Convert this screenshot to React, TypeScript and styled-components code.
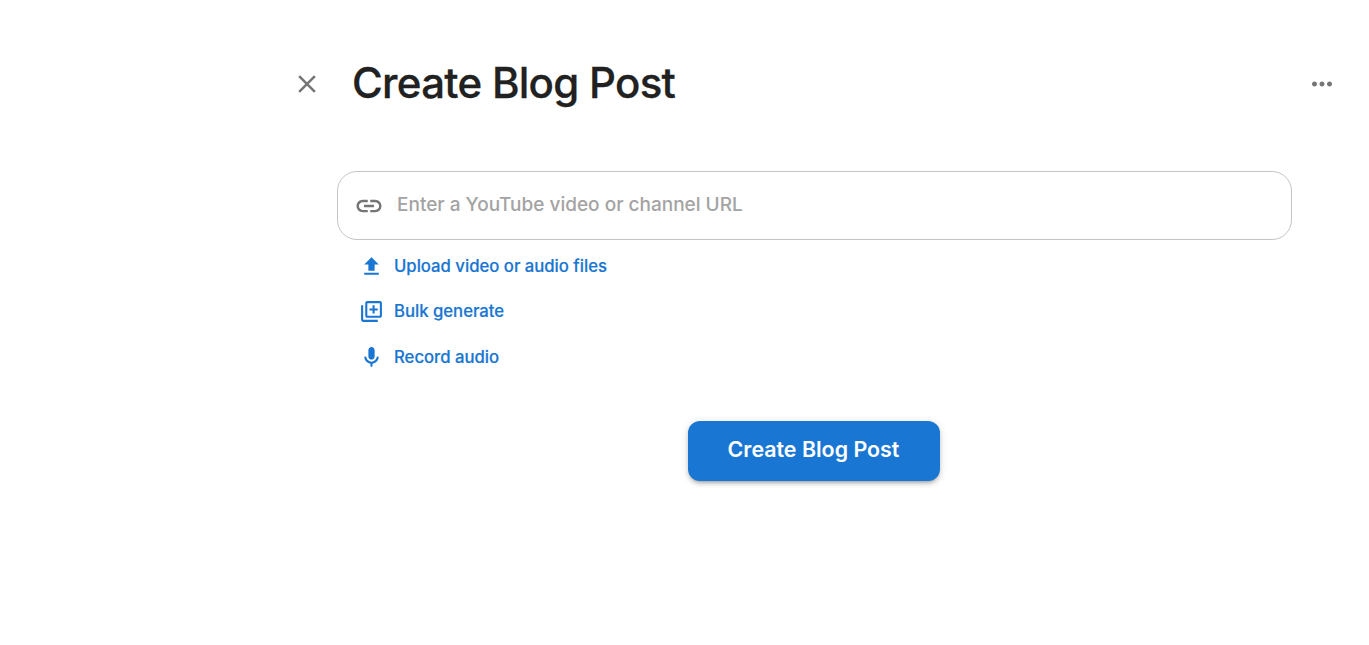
import React from 'react';
import styled, { createGlobalStyle } from 'styled-components';

const GlobalStyle = createGlobalStyle`
  html, body {
    margin: 0;
    padding: 0;
    background: #fff;
    font-family: 'Inter', 'Liberation Sans', sans-serif;
  }
`;

const Page = styled.div`
  height: 645px;
  overflow: hidden;
  box-sizing: border-box;
  padding: 54px 32px 0 292px;
`;

const Header = styled.header`
  display: flex;
  align-items: center;
  height: 60px;
`;

const IconButton = styled.button`
  display: flex;
  align-items: center;
  justify-content: center;
  width: 30px;
  height: 30px;
  padding: 0;
  border: 0;
  background: none;
  color: #757575;
  cursor: pointer;
`;

const Title = styled.h1`
  flex: 1;
  margin: 0 0 2px 30px;
  font-size: 42px;
  line-height: 60px;
  font-weight: 500;
  letter-spacing: -0.72px;
  color: #212121;
  -webkit-text-stroke: 0.3px #212121;
`;

const Form = styled.main`
  display: flex;
  flex-direction: column;
  width: 955px;
  margin: 57px 0 0 45px;
`;

const UrlField = styled.label`
  display: flex;
  align-items: center;
  gap: 13px;
  height: 69px;
  box-sizing: border-box;
  padding: 0 16px;
  border: 1px solid #c4c4c4;
  border-radius: 20px;
  color: #757575;
`;

const UrlInput = styled.input`
  flex: 1;
  border: 0;
  outline: 0;
  padding: 0 0 2px;
  background: none;
  font: 500 19px 'Inter', 'Liberation Sans', sans-serif;
  color: #212121;
  &::placeholder {
    color: #a3a3a3;
    opacity: 1;
  }
`;

const Actions = styled.div`
  display: flex;
  flex-direction: column;
  margin-top: 3px;
  padding-left: 22px;
`;

const Action = styled.a`
  display: flex;
  align-items: center;
  gap: 10px;
  height: 45.5px;
  font-size: 16.7px;
  font-weight: 500;
  color: #1976d2;
  -webkit-text-stroke: 0.2px #1976d2;
  cursor: pointer;

  svg {
    margin-top: 1px;
  }
`;

const Submit = styled.button`
  align-self: center;
  width: 252px;
  height: 60px;
  margin: 41px 2px 0 0;
  padding: 0 0 4px;
  border: 0;
  border-radius: 12px;
  background: #1976d2;
  color: #fff;
  font: 600 21.4px 'Inter', 'Liberation Sans', sans-serif;
  box-shadow: 0 3px 3px -2px rgba(0, 0, 0, 0.2), 0 3px 4px rgba(0, 0, 0, 0.14), 0 1px 8px rgba(0, 0, 0, 0.12);
  cursor: pointer;
`;

type IconProps = { d: string; size: number };

const Icon = ({ d, size }: IconProps) => (
  <svg width={size} height={size} viewBox="0 0 24 24" fill="currentColor">
    <path d={d} />
  </svg>
);

const CLOSE = 'M19 6.41 17.59 5 12 10.59 6.41 5 5 6.41 10.59 12 5 17.59 6.41 19 12 13.41 17.59 19 19 17.59 13.41 12z';
const MORE = 'M6 10c-1.1 0-2 .9-2 2s.9 2 2 2 2-.9 2-2-.9-2-2-2zm12 0c-1.1 0-2 .9-2 2s.9 2 2 2 2-.9 2-2-.9-2-2-2zm-6 0c-1.1 0-2 .9-2 2s.9 2 2 2 2-.9 2-2-.9-2-2-2z';
const LINK = 'M3.9 12c0-1.71 1.39-3.1 3.1-3.1h4V7H7c-2.76 0-5 2.24-5 5s2.24 5 5 5h4v-1.9H7c-1.71 0-3.1-1.39-3.1-3.1zM8 13h8v-2H8v2zm9-6h-4v1.9h4c1.71 0 3.1 1.39 3.1 3.1s-1.39 3.1-3.1 3.1h-4V17h4c2.76 0 5-2.24 5-5s-2.24-5-5-5z';
const UPLOAD = 'M5 20h14v-2H5v2zm0-10h4v6h6v-6h4l-7-7-7 7z';
const LIBRARY_ADD = 'M4 6H2v14c0 1.1.9 2 2 2h14v-2H4V6zm16-4H8c-1.1 0-2 .9-2 2v12c0 1.1.9 2 2 2h12c1.1 0 2-.9 2-2V4c0-1.1-.9-2-2-2zm0 14H8V4h12v12zm-7-2h2v-3h3V9h-3V6h-2v3h-3v2h3z';
const MIC = 'M12 14c1.66 0 3-1.34 3-3V5c0-1.66-1.34-3-3-3S9 3.34 9 5v6c0 1.66 1.34 3 3 3zm5.91-3c-.49 0-.9.36-.98.85C16.52 14.2 14.47 16 12 16s-4.52-1.8-4.93-4.15c-.08-.49-.49-.85-.98-.85-.61 0-1.09.54-1 1.14.49 3 2.89 5.35 5.91 5.78V20c0 .55.45 1 1 1s1-.45 1-1v-2.08c3.02-.43 5.42-2.78 5.91-5.78.1-.6-.39-1.14-1-1.14z';

const actions = [
  { label: 'Upload video or audio files', icon: UPLOAD },
  { label: 'Bulk generate', icon: LIBRARY_ADD },
  { label: 'Record audio', icon: MIC },
];

export default function App() {
  return (
    <Page>
      <GlobalStyle />
      <Header>
        <IconButton aria-label="Close">
          <Icon d={CLOSE} size={30} />
        </IconButton>
        <Title>Create Blog Post</Title>
        <IconButton aria-label="More">
          <Icon d={MORE} size={30} />
        </IconButton>
      </Header>
      <Form>
        <UrlField>
          <Icon d={LINK} size={30} />
          <UrlInput placeholder="Enter a YouTube video or channel URL" />
        </UrlField>
        <Actions>
          {actions.map((a) => (
            <Action key={a.label}>
              <Icon d={a.icon} size={25} />
              {a.label}
            </Action>
          ))}
        </Actions>
        <Submit>Create Blog Post</Submit>
      </Form>
    </Page>
  );
}
